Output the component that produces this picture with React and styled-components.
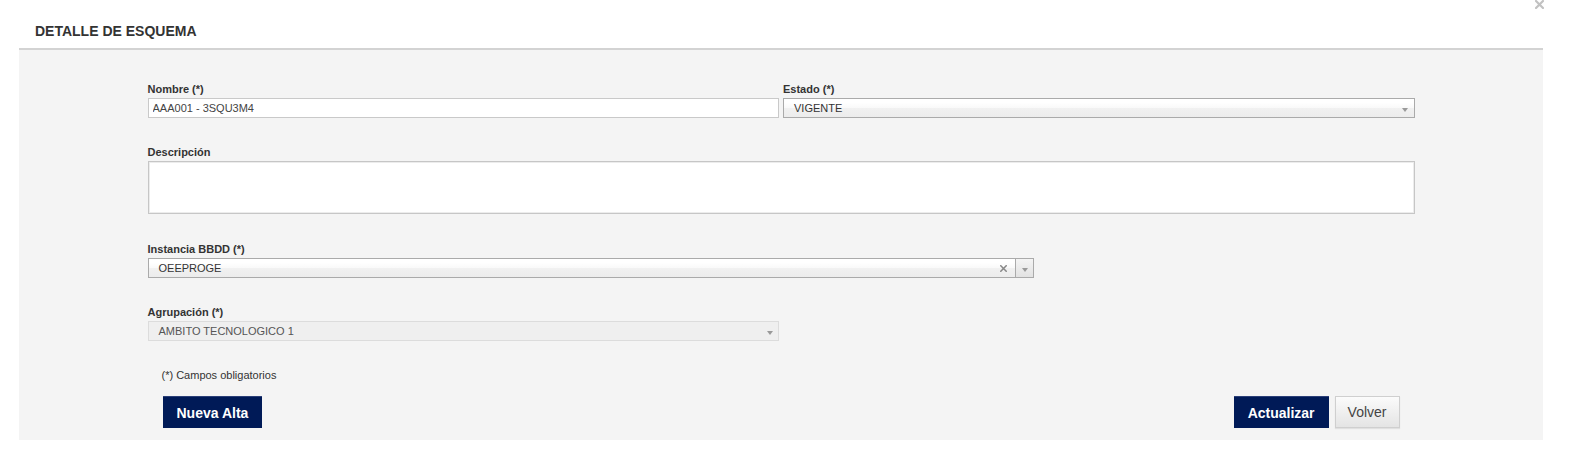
import React from 'react';
import styled, { createGlobalStyle } from 'styled-components';

const GlobalStyle = createGlobalStyle`
    body {
        margin: 0;
        background: #fff;
        font-family: "Liberation Sans", Arial, sans-serif;
        color: #333;
    }
`;

// modal shell
const Page = styled.div`
    position: relative;
    padding: 0 33px 0 19px;
`;

const CloseIcon = styled.svg`
    position: absolute;
    top: 0;
    right: 32px;
    width: 9px;
    height: 9px;
`;

const Header = styled.div`
    height: 50px;
    box-sizing: border-box;
    padding: 24px 16px 0;
    border-bottom: 2px solid #d3d3d3;
`;

const Title = styled.h1`
    margin: 0;
    font-size: 14px;
    line-height: 14px;
    font-weight: bold;
    color: #333;
`;

const Body = styled.div`
    background: #f4f4f4;
    padding: 33px 0 12px;
`;

const Form = styled.div`
    width: 1267px;
    margin: 0 auto;
`;

const Row = styled.div`
    display: flex;
    gap: 4px;
    margin-top: ${p => p.$mt || 0}px;
`;

const Field = styled.div`
    width: ${p => p.$w || '100%'};
`;

const Label = styled.div`
    font-size: 11px;
    font-weight: bold;
    line-height: 13px;
    margin-bottom: 2px;
    color: #333;
`;

const TextInput = styled.input`
    display: block;
    width: 100%;
    height: 20px;
    box-sizing: border-box;
    border: 1px solid #c9c9c9;
    background: #fff;
    padding: 0 4px;
    font-family: inherit;
    font-size: 11px;
    color: #444;
    outline: none;
`;

const TextArea = styled.textarea`
    display: block;
    width: 100%;
    height: 53px;
    box-sizing: border-box;
    border: 1px solid #c6c6c6;
    box-shadow: inset 0 0 0 1px #ececec;
    background: #fff;
    resize: none;
    outline: none;
    font-family: inherit;
    font-size: 11px;
`;

// chosen-like select
const Select = styled.div`
    display: flex;
    align-items: stretch;
    height: 20px;
    box-sizing: border-box;
    border: 1px solid ${p => (p.$disabled ? '#dcdcdc' : '#aaa')};
    background: ${p => (p.$disabled
        ? '#efefef'
        : 'linear-gradient(#fff 20%, #f9f9f9 50%, #f1f1f1 52%, #ececec 100%)')};
    font-size: 11px;
    color: ${p => (p.$disabled ? '#555' : '#333')};
`;

const SelectText = styled.span`
    flex: 1;
    padding-left: 10px;
    line-height: 18px;
`;

const ClearX = styled.svg`
    align-self: center;
    width: 7px;
    height: 7px;
    margin-right: 8px;
`;

const Arrow = styled.span`
    width: 17px;
    display: flex;
    align-items: center;
    justify-content: center;
    border-left: ${p => (p.$divider ? '1px solid #aaa' : 'none')};
    background: ${p => (p.$divider ? 'linear-gradient(#f4f4f4, #e2e2e2)' : 'transparent')};

    &::after {
        content: '';
        margin-top: 3px;
        border-left: 3px solid transparent;
        border-right: 3px solid transparent;
        border-top: 4px solid #999;
    }
`;

const Note = styled.div`
    margin-top: 28px;
    padding-left: 14px;
    font-size: 11px;
    line-height: 13px;
    color: #333;
`;

const Buttons = styled.div`
    display: flex;
    justify-content: space-between;
    margin-top: 14px;
    padding: 0 15px;
`;

const Group = styled.div`
    display: flex;
    gap: 6px;
`;

const Button = styled.button`
    height: 32px;
    box-sizing: border-box;
    padding: 0 ${p => (p.$primary ? 14 : 12)}px;
    font-family: inherit;
    font-size: 14px;
    font-weight: ${p => (p.$primary ? 'bold' : 'normal')};
    color: ${p => (p.$primary ? '#fff' : '#444')};
    background: ${p => (p.$primary
        ? '#001a57'
        : 'linear-gradient(#fbfbfb, #e4e4e4)')};
    border: ${p => (p.$primary ? 'none' : '1px solid #cfcfcf')};
    border-top: 1px solid ${p => (p.$primary ? '#2b3f78' : '#cfcfcf')};
    box-shadow: ${p => (p.$primary ? 'none' : '0 1px 1px rgba(0,0,0,0.08)')};
    cursor: pointer;
`;

const Cross = ({ color, width }) => (
    <path d="M1 1L8 8M8 1L1 8" stroke={color} strokeWidth={width} strokeLinecap="square" fill="none" />
);

const App = () => (
    <Page>
        <GlobalStyle />
        <CloseIcon viewBox="0 0 9 9">
            <Cross color="#c2c2c2" width={2.2} />
        </CloseIcon>
        <Header>
            <Title>DETALLE DE ESQUEMA</Title>
        </Header>
        <Body>
            <Form>
                <Row>
                    <Field $w="50%">
                        <Label>Nombre (*)</Label>
                        <TextInput defaultValue="AAA001 - 3SQU3M4" />
                    </Field>
                    <Field $w="50%">
                        <Label>Estado (*)</Label>
                        <Select>
                            <SelectText>VIGENTE</SelectText>
                            <Arrow />
                        </Select>
                    </Field>
                </Row>
                <Row $mt={28}>
                    <Field>
                        <Label>Descripción</Label>
                        <TextArea />
                    </Field>
                </Row>
                <Row $mt={29}>
                    <Field $w="70%">
                        <Label>Instancia BBDD (*)</Label>
                        <Select>
                            <SelectText>OEEPROGE</SelectText>
                            <ClearX viewBox="0 0 9 9">
                                <Cross color="#888" width={2} />
                            </ClearX>
                            <Arrow $divider />
                        </Select>
                    </Field>
                </Row>
                <Row $mt={28}>
                    <Field $w="calc(50% - 2px)">
                        <Label>Agrupación (*)</Label>
                        <Select $disabled>
                            <SelectText>AMBITO TECNOLOGICO 1</SelectText>
                            <Arrow />
                        </Select>
                    </Field>
                </Row>
                <Note>(*) Campos obligatorios</Note>
                <Buttons>
                    <Button $primary>Nueva Alta</Button>
                    <Group>
                        <Button $primary>Actualizar</Button>
                        <Button>Volver</Button>
                    </Group>
                </Buttons>
            </Form>
        </Body>
    </Page>
);

export default App;
